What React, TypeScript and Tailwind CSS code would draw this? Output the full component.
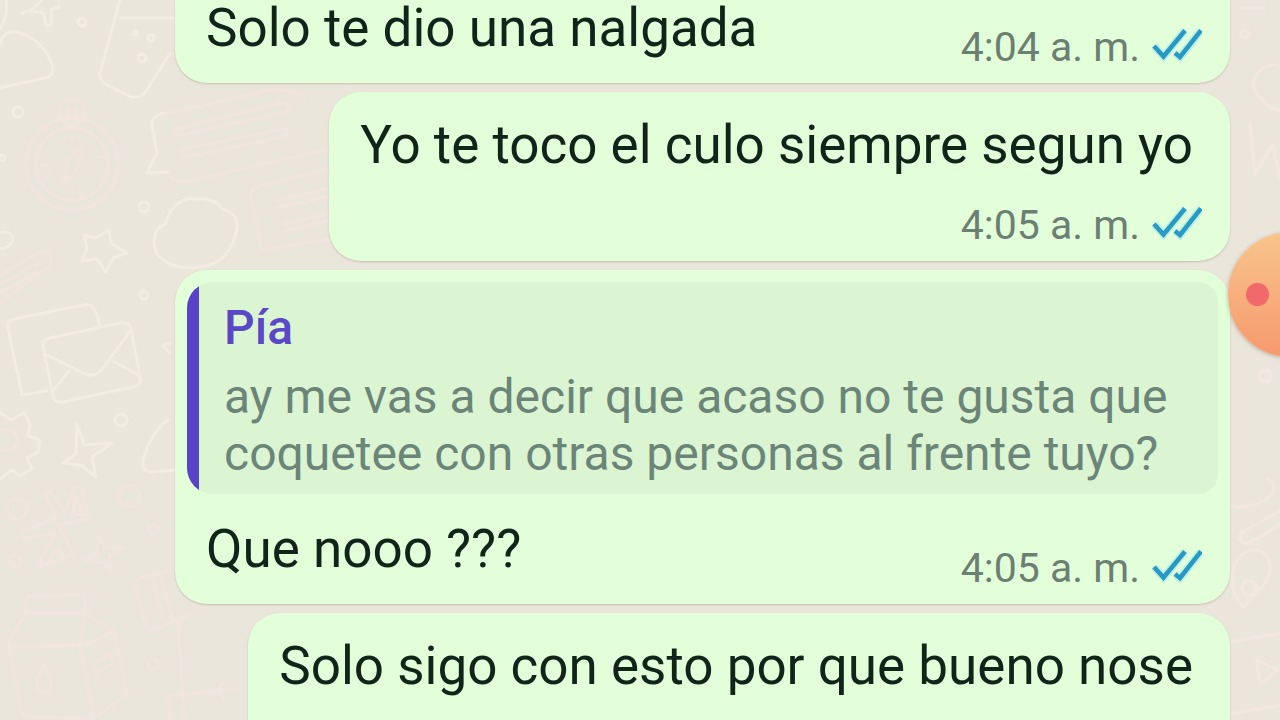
import type { ReactNode } from "react";

interface MessageProps {
  text: string;
  time?: string;
  first?: boolean;
  stacked?: boolean;
  children?: ReactNode;
}

function Ticks() {
  return (
    <svg width="50" height="38" viewBox="0 0 50 38" fill="none" aria-label="Leído" role="img">
      <g stroke="#8be4f5" strokeWidth="8" opacity="0.45">
        <path d="M2 18 11.500 28.500 33 2.500" />
        <path d="M23 25 28 29 49 2.500" />
      </g>
      <g stroke="#2799c4" strokeWidth="4.500">
        <path d="M2 18 11.500 28.500 33 2.500" />
        <path d="M23 25 28 29 49 2.500" />
      </g>
    </svg>
  );
}

function Time({ time }: { time: string }) {
  return (
    <div className="flex shrink-0 items-center justify-end gap-3 pb-3">
      <time className="text-[41px] leading-[48px] text-[#6b8073]">{time}</time>
      <Ticks />
    </div>
  );
}

function Message({ text, time, first, stacked, children }: MessageProps) {
  const shape = first ? "rounded-b-[32px]" : "rounded-[32px]";
  const width = stacked ? "w-fit" : "w-full";
  return (
    <li className={`${shape} ${width} bg-[#e3ffd9] shadow-[0_1px_2px_rgba(120,100,80,0.3)]`}>
      {children}
      {stacked ? (
        <div className="pt-[25px] pr-7 pl-[31px]">
          <p className="pr-[9px] pb-7 text-[53px] leading-[56px] text-[#10241a]">{text}</p>
          {time ? <Time time={time} /> : <div className="h-16" />}
        </div>
      ) : (
        <div className="flex items-end justify-between pr-7 pl-[31px]">
          <p className="pb-[27px] text-[53px] leading-[56px] text-[#10241a]">{text}</p>
          {time && <Time time={time} />}
        </div>
      )}
    </li>
  );
}

function Quote({ name, text }: { name: string; text: string }) {
  return (
    <div className="px-3 pt-3 pb-[27px]">
      <blockquote className="flex overflow-hidden rounded-l-[26px] rounded-r-[20px] bg-[#dbf5d3]">
        <div className="w-3 shrink-0 bg-[#5843c9]" />
        <div className="px-[25px] pt-[18px] pb-3">
          <cite className="block text-[48px] leading-[56px] font-medium text-[#5a48c6] not-italic">{name}</cite>
          <p className="pt-3 text-[48px] leading-[57px] text-[#6b8578]">{text}</p>
        </div>
      </blockquote>
    </div>
  );
}

function Wallpaper() {
  return (
    <div className="absolute inset-0 -z-10 flex justify-between overflow-hidden" aria-hidden="true">
      <svg width="340" height="720" viewBox="0 0 340 720" fill="none" strokeWidth="3" strokeLinecap="round" strokeLinejoin="round">
        <g stroke="#f2ece2">
          <path d="M0 44C2 35 8 31 17 32c17 4 30 17 35 33 2 8-1 11-7 13L0 88" />
          <path d="M0 28c6-8 8-17 6-28M22 13c8-2 15-7 20-13M30 11l14 2 2 13 5-1 0-15 8-3" />
          <path d="M120 0 100 73c-1 6 2 9 7 12l20 10c7 4 15 2 19-4l24-38M120 18h55" />
          <circle cx="142" cy="58" r="4" /><circle cx="151" cy="38" r="3" /><circle cx="135" cy="33" r="2" />
          <circle cx="82" cy="22" r="4" /><circle cx="18" cy="112" r="5" /><circle cx="2" cy="158" r="3" />
          <path d="M165 113c-8 1-13 4-13 12l5 28-10 20 21-1" />
          <circle cx="144" cy="207" r="5" />
          <path d="M154 243c0-11 4-17 12-19 3-17 15-27 31-25 12-1 21 3 25 10 13 3 19 12 13 27-6 20-19 30-36 31-27 3-44-8-45-24z" />
          <path d="M84 235l12 3 13-8 2 13 16 10-14 5-7 14-9-13-15 2 5-13z" />
          <path d="M0 233c9-3 15 2 12 9-2 5-8 7-12 6" />
          <circle cx="144" cy="295" r="4" />
          <path d="M22 395 8 328c-1-5 1-8 6-9l69-14c7-2 11 2 13 8l4 13M22 395l25-4" />
          <path d="M43 346c-1-5 2-7 6-8l71-15c6-1 10 1 11 6l9 48c1 6-1 9-7 10l-70 15c-6 1-9-1-10-6z" />
          <path d="M45 354l38 19c8 4 15 2 20-5l28-38M52 392l17-21M113 361l25 14" />
          <circle cx="121" cy="420" r="6" />
          <path d="M77 424l7 21 28-2-20 14 4 20-15-12-18-2 13-9z" />
          <path d="M168 420c-12 8-23 27-25 43-1 7 3 9 9 9l22-2M170 343l-7 3 7 7" />
          <path d="M0 413l11 7 13-7 6 11-2 12 12 4-2 12-11 6 5 11-12 7-8-6-12 9" />
        </g>
        <g stroke="#f2e5df">
          <circle cx="72" cy="164" r="46" /><circle cx="72" cy="164" r="36" />
          <path d="M83 145 78 168 63 184 67 160z" /><path d="M72 134v5M72 190v5M42 165h4M99 157h4M50 175l-7 3M80 192l2 5" />
          <circle cx="72" cy="112" r="13" /><circle cx="72" cy="113" r="4" />
          <path d="M165 114l100-23c16-3 29-1 40 6M176 129l106-26c6 0 8 6 3 9l-108 24c-5 0-6-5-1-7zM184 149l98-20c7-1 7 7 1 8l-97 20c-5 1-7-6-2-8zM170 175c4 6 10 8 19 6l140-32" />
          <path d="M262 250l-11-52c-1-6 2-10 8-12l70-17M276 201l53-13M277 208l53-12M284 224l46-11M285 231l46-11M262 250l68-11" />
          <path d="M0 275l38-22c12-5 19 7 9 15L0 303M0 285l38-22M0 293l36-21" />
          <circle cx="6" cy="440" r="11" />
          <circle cx="17" cy="509" r="10" /><circle cx="129" cy="496" r="11" /><circle cx="153" cy="529" r="5" />
          <circle cx="15" cy="561" r="6" />
          <path d="M56 518 44 493l6-2 15 21 10-25 7 1 7 31-31 6 16 30-37 12 18-34-31 6-2-7zM75 495l-2 19 11 1zM58 548l-9 14 15-3z" />
          <path d="M98 536l8 12 18 0-15 9 2 16-8-10-20-4 15-6z" />
          <path d="M26 613v-13c0-3 1-4 4-4l50-1c3 0 5 2 5 5v13zM26 613 9 641v6l71-2 4-29M9 647l12 63c1 5 4 7 8 7l65 1-14-73M85 613l29 19 12 58c1 4 0 6-3 8l-29 20M84 645l30-13" />
          <path d="M44 666c-7 9-9 18-7 22 4 7 13 5 14-2 0-7-3-14-7-20zM94 664l16-10 3 10-17 9z" />
          <path d="M136 588c-2-8 4-11 10-12l22-5M136 588l9 35c2 6 5 7 10 6l34-14M152 576l11 44M160 574l12 44" />
          <path d="M178 620l6 100M170 720l-2-24 69-7M224 680l-6 10 6 9" />
          <circle cx="153" cy="664" r="5" />
        </g>
      </svg>
      <svg width="50" height="720" viewBox="0 0 50 720" fill="none" strokeWidth="3" strokeLinecap="round" strokeLinejoin="round" stroke="#f2e8e1">
        <path d="M12 8h22M15 30a4 4 0 1 0 .1 0M50 66c-12-4-26 5-27 20 5 12 16 22 27 25" />
        <path d="M20 124l5 50 18-30 7 36" />
        <circle cx="35" cy="376" r="6" />
        <path d="M0 506c17 3 33-2 42-12 5-8 0-13-5-16M50 511l-36 20c-8 6-4 14 5 12l31-18" />
        <path d="M2 580c0-22 14-33 28-29 13 5 12 22 5 32l-22 24c-7-7-11-16-11-27z" /><circle cx="19" cy="588" r="7" />
        <path d="M0 642l50-9M26 660l22 10-18 14zM0 714l50-9" />
      </svg>
    </div>
  );
}

export default function App() {
  return (
    <main className="relative isolate h-screen overflow-hidden bg-[#ebe6dc] font-[Roboto,sans-serif]">
      <Wallpaper />
      <ul className="flex flex-col items-end gap-[9px] pr-[50px] pl-[175px]">
        <Message first text="Solo te dio una nalgada" time="4:04 a. m." />
        <Message stacked text="Yo te toco el culo siempre segun yo" time="4:05 a. m." />
        <Message text="Que nooo ???" time="4:05 a. m.">
          <Quote name="Pía" text="ay me vas a decir que acaso no te gusta que coquetee con otras personas al frente tuyo?" />
        </Message>
        <Message stacked text="Solo sigo con esto por que bueno nose" />
      </ul>
      <button
        type="button"
        aria-label="Grabar pantalla"
        className="absolute top-[232px] -right-[73px] flex size-[125px] items-center rounded-full bg-linear-to-b from-[#f8c58c] to-[#f6996e] pl-[18px] shadow-[0_1px_4px_rgba(120,80,60,0.4)]"
      >
        <span className="size-[23px] rounded-full bg-[#f2696b]" />
      </button>
    </main>
  );
}
